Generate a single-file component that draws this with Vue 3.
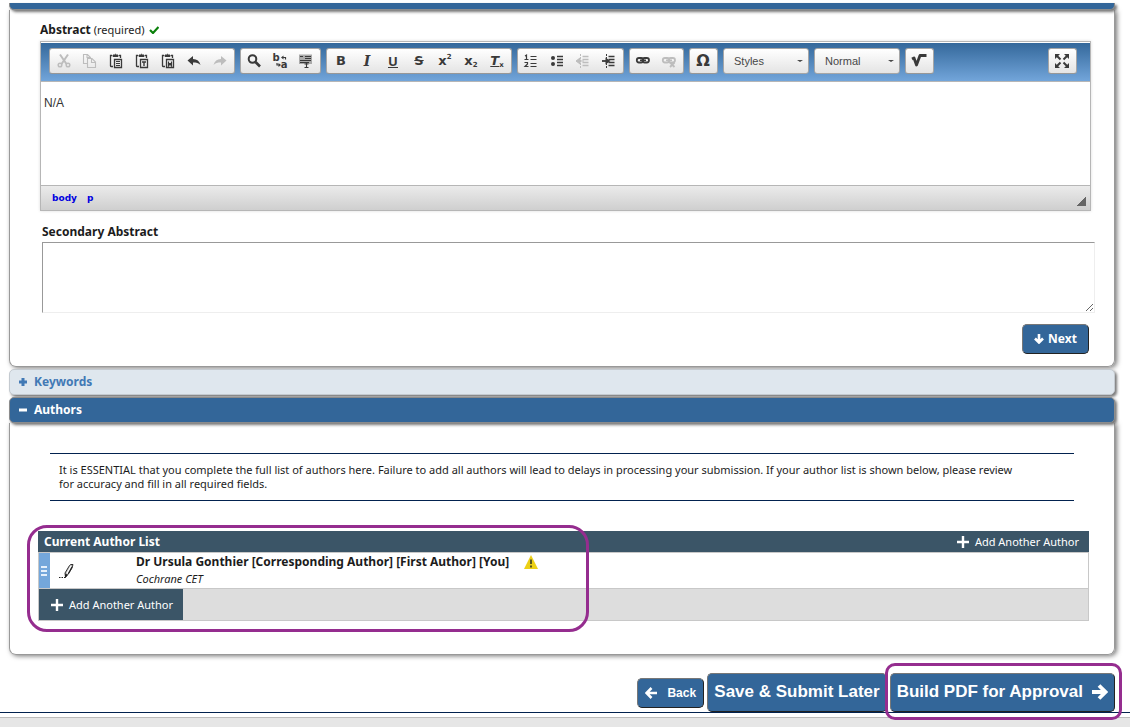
<script setup>
import { ref } from 'vue'

const abstractText = ref('N/A')
const secondary = ref('')
const style = ref('Styles')
const format = ref('Normal')

const groups = [
  { wide: true, items: ['Cut', 'Copy', 'Paste', 'Paste as text', 'Paste from Word', 'Undo', 'Redo'] },
  { items: ['Find', 'Replace', 'Select all'] },
  { wide: true, items: ['Bold', 'Italic', 'Underline', 'Strikethrough', 'Superscript', 'Subscript', 'Remove format'] },
  { items: ['Numbered list', 'Bulleted list', 'Decrease indent', 'Increase indent'] },
  { items: ['Link', 'Unlink'] },
  { items: ['Special character'] },
]
const disabled = ['Cut', 'Copy', 'Redo', 'Decrease indent', 'Unlink']

const clip = '<path d="M4 2.500H2.500v10.500q0 .5.5.5H5M11 2.500h1.500V5" stroke-width="1.300"/><path d="M5 3.500V2h1.500q1-1.500 2 0H10v1.500z" fill="currentColor" stroke-width="1"/><path d="M6.500 6.500h7v8h-7z" stroke-width="1.300"/>'
const lines = '<path d="M7.500 3.500h6M7.500 6.500h6M7.500 9.500h6M7.500 12.500h6" stroke-width="1.300"/><path d="M5.500 1v14" stroke-width="1" stroke-dasharray="2 1"/>'
const chain = '<rect x="1.800" y="5" width="6.500" height="4.500" rx="2.200" stroke-width="1.800"/><rect x="7.500" y="5" width="6.500" height="4.500" rx="2.200" stroke-width="1.800"/><path d="M5 7.300h6" stroke-width="1.600"/>'
const icons = {
  'Cut': '<path d="M4 1.500l6.500 9.500M12 1.500L5.500 11" stroke-width="2"/><circle cx="4" cy="12" r="1.800" stroke-width="1.500"/><circle cx="12" cy="12" r="1.800" stroke-width="1.500"/>',
  'Copy': '<path d="M5 10.500H1.500v-9h4l3 3V5M5 1.500v3h3" stroke-width="1.100"/><path d="M5.500 5.500h4.500l3.500 3.500v5.500h-8zM9.500 5.500v4h4" stroke-width="1.100"/>',
  'Paste': clip + '<path d="M8 8.500h4M8 10.500h4M8 12.500h4" stroke-width="1.100"/>',
  'Paste as text': clip + '<path d="M8 9h4M10 9v4" stroke-width="1.400"/>',
  'Paste from Word': clip + '<path d="M8.500 8.500V13l1.500-2 1.500 2V8.500M8.500 10.500h3" stroke-width="1.200"/>',
  'Undo': '<path d="M7 3v3c4 0 6.500 2 7.500 6-2-2-4-2.500-7.500-2.500v3L1.500 7.500z" fill="currentColor" stroke="none"/>',
  'Redo': '<path d="M9 3v3c-4 0-6.500 2-7.500 6 2-2 4-2.500 7.500-2.500v3l5.500-5z" fill="currentColor" stroke="none"/>',
  'Find': '<circle cx="6.500" cy="6" r="3.800" stroke-width="2"/><path d="M9.500 9l4.500 4.500" stroke-width="2.600"/>',
  'Select all': '<path d="M1 1.500h13V11H1z" fill="#aaa" stroke="none"/><path d="M2 3.500h3M7 3.500h6M7 5.500h6M2 7.500h11M2 9.500h9" stroke-width="1.200"/><path d="M8.500 10v4M6.500 11h4M6.500 14.500h4" stroke-width="1.100"/>',
  'Numbered list': '<path d="M2 3l1.500-1v4.500M1.500 6.500h4M1.500 9.500h3v1.500L2 13.500h3.500" stroke-width="1.200"/><path d="M7.500 3.500h6M7.500 6.500h6M7.500 10.500h6M7.500 13.500h6" stroke-width="1.200"/>',
  'Bulleted list': '<circle cx="4" cy="5" r="2" fill="currentColor" stroke="none"/><circle cx="4" cy="11" r="2" fill="currentColor" stroke="none"/><path d="M8 3.500h6M8 6.500h6M8 9.500h6M8 12.500h6" stroke-width="1.400"/>',
  'Decrease indent': lines + '<path d="M5 5v6L1 8zM5 8h4" fill="currentColor" stroke-width="1"/>',
  'Increase indent': lines + '<path d="M1 8h4" stroke-width="1.800"/><path d="M4.500 4.500v7l5-3.500z" fill="currentColor" stroke="none"/>',
  'Link': chain,
  'Unlink': chain + '<path d="M9 9.500l4.500 4.500M13.500 9.500L9 14" stroke-width="1.800"/>',
}
</script>

<template>
  <main class="page">
    <div class="bar bar-cut"></div>
    <section class="panel abstract">
      <div class="label-row">
        <label for="abs"><b>Abstract</b> (required)</label>
        <svg class="tick" viewBox="0 0 10 8"><path d="M1 4l3 3 5.500-6" fill="none" stroke="#0a800a" stroke-width="2.200" /></svg>
      </div>
      <div class="editor">
        <div class="toolbar">
          <div v-for="(g, i) in groups" :key="i" class="group" :class="{ wide: g.wide }">
            <button v-for="name in g.items" :key="name" type="button" class="tool" :class="{ off: disabled.includes(name) }" :aria-label="name">
              <svg v-if="icons[name]" viewBox="0 0 16 16" v-html="icons[name]"></svg>
              <span v-else-if="name === 'Bold'" class="g-bold">B</span>
              <i v-else-if="name === 'Italic'" class="g-serif">I</i>
              <span v-else-if="name === 'Underline'" class="g-under">U</span>
              <s v-else-if="name === 'Strikethrough'" class="g-bold">S</s>
              <span v-else-if="name === 'Superscript'" class="g-x">x<small class="up">2</small></span>
              <span v-else-if="name === 'Subscript'" class="g-x">x<small class="down">2</small></span>
              <span v-else-if="name === 'Remove format'" class="g-x"><i class="tx">T</i><small class="down">x</small></span>
              <span v-else-if="name === 'Special character'" class="g-omega">Ω</span>
              <span v-else class="g-replace">
                <span>b</span><span class="low">a</span>
                <svg viewBox="0 0 16 16"><path d="M9 4.500h3.500v2M7 12H4v-2" fill="none" stroke="currentColor" stroke-width="1.200" /><path d="M10.500 2.500v4l-2.500-2zM5.500 10v4L8 12z" fill="currentColor" stroke="none" /></svg>
              </span>
            </button>
          </div>
          <div class="combo">
            <select v-model="style" aria-label="Styles"><option>Styles</option></select>
            <span class="caret"></span>
          </div>
          <div class="combo">
            <select v-model="format" aria-label="Paragraph format"><option>Normal</option></select>
            <span class="caret"></span>
          </div>
          <div class="group">
            <button type="button" class="tool" aria-label="Math">
              <svg viewBox="0 0 16 16"><path d="M1 6l2-1 2.500 7L9 2.500h6.500" stroke-width="2.800" stroke-linejoin="round" /></svg>
            </button>
          </div>
          <div class="group end">
            <button type="button" class="tool" aria-label="Maximize">
              <svg viewBox="0 0 16 16"><path d="M2.500 2.500l4 4M13.500 2.500l-4 4M2.500 13.500l4-4M13.500 13.500l-4-4" stroke-width="2" /><path d="M1 1h5L1 6zM15 1v5l-5-5zM1 15v-5l5 5zM15 15h-5l5-5z" fill="currentColor" stroke="none" /></svg>
            </button>
          </div>
        </div>
        <textarea id="abs" v-model="abstractText" class="content"></textarea>
        <div class="status">
          <a href="#">body</a><a href="#">p</a>
          <span class="grip"></span>
        </div>
      </div>
      <div class="secondary">
        <label for="sec"><b>Secondary Abstract</b></label>
        <textarea id="sec" v-model="secondary"></textarea>
      </div>
      <div class="next-row">
        <button type="button" class="btn small">
          <svg class="arrow-s" viewBox="0 0 10 10"><path d="M5 0v8M1 4.500l4 4 4-4" fill="none" stroke="currentColor" stroke-width="2.600" /></svg>
          Next
        </button>
      </div>
    </section>

    <button type="button" class="bar closed">
      <svg class="sign" viewBox="0 0 10 10"><path d="M5 1v8M1 5h8" stroke="currentColor" stroke-width="3" /></svg>
      Keywords
    </button>
    <button type="button" class="bar">
      <svg class="sign" viewBox="0 0 10 10"><path d="M1 5h8" stroke="currentColor" stroke-width="3" /></svg>
      Authors
    </button>

    <section class="panel authors">
      <p class="notice">It is ESSENTIAL that you complete the full list of authors here. Failure to add all authors will lead to delays in processing your submission. If your author list is shown below, please review for accuracy and fill in all required fields.</p>
      <div class="list">
        <table>
          <thead>
            <tr>
              <th colspan="3">
                <div class="head">
                  <span>Current Author List</span>
                  <button type="button" class="add">
                    <svg viewBox="0 0 12 12"><path d="M6 0v12M0 6h12" stroke="currentColor" stroke-width="2.400" /></svg>
                    Add Another Author
                  </button>
                </div>
              </th>
            </tr>
          </thead>
          <tbody>
            <tr class="row">
              <td class="handle"><span></span><span></span><span></span></td>
              <td class="edit">
                <button type="button" aria-label="Edit author">
                  <svg viewBox="0 0 16 16"><path d="M6.500 14.500L6 10l4.500-7.500Q11 1 14 1.500L13 5 8.500 12z" fill="#bbb" stroke="#333" stroke-width="1" /><path d="M8 10.500L12 3" stroke="#fff" stroke-width="1.300" /><path d="M9.500 10.500L13 4" stroke="#222" stroke-width="1.200" /><path d="M6 14.500l.5-4 2 1.500z" fill="#111" /><path d="M0 14.500h1.500M2.500 14.500H4M5 14.500h1.500" stroke="#222" stroke-width="1.200" /></svg>
                </button>
              </td>
              <td class="person">
                <div class="name">
                  <b>Dr Ursula Gonthier [Corresponding Author] [First Author] [You]</b>
                  <svg viewBox="0 0 14 14"><path d="M7 0l7 14H0z" fill="#ecd016" /><path d="M7 4.500V9M7 10.500v2" stroke="#4a4a20" stroke-width="1.800" /></svg>
                </div>
                <i>Cochrane CET</i>
              </td>
            </tr>
            <tr class="foot">
              <td colspan="3">
                <button type="button" class="add solid">
                  <svg viewBox="0 0 12 12"><path d="M6 0v12M0 6h12" stroke="currentColor" stroke-width="2.400" /></svg>
                  Add Another Author
                </button>
              </td>
            </tr>
          </tbody>
        </table>
        <div class="ring ring-list"></div>
      </div>
    </section>

    <div class="actions">
      <button type="button" class="btn small arial back">
        <svg class="arrow-m" viewBox="0 0 12 12"><path d="M12 6H2M6.500 1L1.500 6l5 5" fill="none" stroke="currentColor" stroke-width="2.600" /></svg>
        Back
      </button>
      <button type="button" class="btn large">Save &amp; Submit Later</button>
      <div class="build">
        <button type="button" class="btn large">
          Build PDF for Approval
          <svg class="arrow-l" viewBox="0 0 16 16"><path d="M0 8h13M7 1.500L13.500 8 7 14.500" fill="none" stroke="currentColor" stroke-width="3.800" /></svg>
        </button>
        <div class="ring ring-build"></div>
      </div>
    </div>
    <footer></footer>
  </main>
</template>

<style>
html, body { height: 100%; margin: 0; background: #fff; }
#app { height: 100%; }
</style>

<style scoped>
* { box-sizing: border-box; }
.page { display: flex; flex-direction: column; min-height: 100%; padding-top: 3px; overflow: hidden; font: 11px/14px "Noto Sans", sans-serif; color: #1c1c1c; }
button { font: inherit; padding: 0; margin: 0; cursor: pointer; }
svg { display: block; flex: none; }
b { font-size: 12px; }

.bar { display: flex; align-items: center; gap: 6px; height: 26px; margin: 2px 15px 0 9px; padding: 0 8px; border: 1px solid #8c8c8c; border-radius: 5px; background: #336699; color: #fff; font-size: 12px; font-weight: bold; box-shadow: 2px 2px 3px #777; position: relative; }
.bar.closed { background: #dfe7ee; color: #4179b5; border-color: #c4cad0; }
.bar-cut { height: 7px; margin-top: 0; border-top: 0; border-radius: 0 0 5px 5px; }
.sign { width: 10px; height: 10px; }
.panel { margin: 0 15px 0 9px; border: 1px solid #999; border-top: 0; border-radius: 0 0 7px 7px; box-shadow: 2px 1px 5px #777; }

.abstract { padding: 13px 23px 12px 30px; }
.label-row { display: flex; align-items: center; gap: 4px; height: 14px; margin-bottom: 4px; }
.tick { width: 10px; height: 8px; }
.editor { border: 1px solid #b6b6b6; padding-top: 1px; box-shadow: 0 0 3px #ddd; }
.toolbar { display: flex; gap: 5px; height: 39px; padding: 5px 13px 0 8px; background: linear-gradient(#34689b, #72a5da); border-bottom: 1px solid #b6b6b6; }
.group { display: flex; height: 26px; padding-right: 1px; border: 1px solid #a6a6a6; border-bottom-color: #979797; border-radius: 3px; background: linear-gradient(#fff, #e4e4e4); }
.group.wide { padding-left: 1px; }
.group.end { margin-left: auto; }
.tool { display: flex; align-items: center; justify-content: center; width: 26px; height: 24px; border: 0; background: none; color: #3a3a3a; font: bold 14px/16px "Liberation Sans", Arial, sans-serif; }
.tool.off { color: #bdbdbd; }
.tool svg { width: 16px; height: 16px; fill: none; stroke: currentColor; }
.g-bold { font: bold 13px/16px "DejaVu Sans", sans-serif; }
.g-serif { font: italic bold 14px/16px "DejaVu Serif", serif; }
.g-under { font: bold 13px/12px "Open Sans", sans-serif; border-bottom: 1px solid currentColor; }
.g-x { display: flex; align-items: center; font: bold 13px/16px "DejaVu Sans", sans-serif; }
.g-x small { font-size: 7px; line-height: 8px; }
.up { align-self: flex-start; }
.down { align-self: flex-end; }
.tx { text-decoration: underline; }
.g-omega { font: bold 16px/16px "DejaVu Sans", sans-serif; }
.g-replace { position: relative; display: flex; justify-content: space-between; width: 15px; height: 16px; font: bold 10px/9px "DejaVu Sans", sans-serif; }
.g-replace .low { align-self: flex-end; }
.g-replace svg { position: absolute; inset: 0; }
.combo { position: relative; width: 86px; height: 26px; }
.combo select { appearance: none; width: 100%; height: 26px; padding: 0 10px; border: 1px solid #a6a6a6; border-radius: 3px; background: linear-gradient(#fff, #e4e4e4); color: #474747; font: 11px/14px "Liberation Sans", Arial, sans-serif; }
.caret { position: absolute; right: 6px; top: 12px; border: 3px solid transparent; border-top: 2px solid #474747; border-bottom: 0; pointer-events: none; }
.content { display: block; width: 100%; height: 103px; padding: 13px 3px; border: 0; resize: none; outline: 0; font: 12px/16px "Liberation Sans", Arial, sans-serif; color: #333; background: #fff; }
.status { display: flex; align-items: center; gap: 10px; height: 25px; padding: 0 4px 0 11px; border-top: 1px solid #b6b6b6; background: linear-gradient(#ebebeb, #cfcfcf); }
.status a { color: #0000e0; font: bold 9px/12px "DejaVu Sans", sans-serif; text-decoration: none; }
.grip { margin: 6px 0 0 auto; width: 9px; height: 9px; background: linear-gradient(135deg, transparent 50%, #666 50%); }
.secondary { margin: 14px -4px 0 2px; }
.secondary label { display: block; margin-bottom: 3px; }
.secondary textarea { display: block; width: 100%; height: 71px; margin: 0; border: 1px solid #eee; border-top-color: #999; border-left-color: #999; outline: 0; background: #fff; }
.next-row { display: flex; justify-content: flex-end; margin-top: 11px; padding-right: 2px; }

.btn { display: flex; align-items: center; justify-content: center; gap: 4px; border: 1px solid; border-color: #777 #222 #222 #777; border-radius: 5px; background: #336699; color: #fff; font-size: 12px; font-weight: bold; white-space: nowrap; }
.btn.small { height: 30px; width: 67px; }
.btn.arial { font: bold 12px/14px "Liberation Sans", Arial, sans-serif; gap: 10px; }
.btn.large { height: 39px; padding: 0 6px 2px; font: bold 17px/20px "Liberation Sans", Arial, sans-serif; gap: 9px; }
.arrow-s { width: 10px; height: 10px; }
.arrow-m { width: 12px; height: 12px; }
.arrow-l { width: 16px; height: 16px; }

.authors { padding: 30px 25px 33px 28px; }
.notice { margin: 0 15px 30px 12px; padding: 9px 50px 9px 9px; border: solid #02224f; border-width: 1px 0; }
.list { position: relative; }
table { width: 100%; border-collapse: separate; border-spacing: 0; table-layout: auto; background: #fff; }
th, td { padding: 0; text-align: left; vertical-align: middle; }
.head { display: flex; justify-content: space-between; align-items: center; height: 21px; padding: 0 10px 0 6px; background: #3b5567; color: #fff; font-size: 12px; }
.add { display: flex; align-items: center; gap: 6px; border: 0; background: none; color: #fff; font-size: 11px; font-weight: normal; }
.add svg { width: 12px; height: 12px; }
.add.solid { height: 31px; padding: 0 10px 0 12px; background: #3b5567; }
.row td { height: 37px; border: solid #c8c8c8; border-width: 1px 0; }
.row .handle { width: 12px; background: #74a7db; border-left-width: 1px; padding-left: 2px; }
.handle span { display: block; width: 6px; height: 2px; margin: 2px 0; background: #e5f0fb; }
.row .person { border-right-width: 1px; }
.edit { width: 86px; }
.edit button { display: block; margin-left: 9px; border: 0; background: none; }
.edit svg { width: 16px; height: 16px; fill: none; }
.name { display: flex; align-items: flex-start; gap: 15px; height: 16px; }
.name svg { width: 14px; height: 14px; }
.person i { display: block; line-height: 16px; }
.foot td { background: #ddd; border: 1px solid #c8c8c8; border-top: 0; }

.ring { position: absolute; border: 3px solid #952d8f; pointer-events: none; z-index: 2; }
.ring-list { left: -11px; top: -6px; width: 562px; bottom: -11px; border-radius: 20px; }
.actions { display: flex; justify-content: flex-end; align-items: center; gap: 3px; margin-top: 18px; padding-right: 15px; border-bottom: 1px solid #02224f; }
.build { position: relative; }
.ring-build { left: -5px; top: -10px; right: -7px; bottom: -8px; border-radius: 10px; }
footer { flex: 1; min-height: 9px; margin-top: 4px; border-top: 1px solid #bbb; background: #e6e6e6; }
</style>
